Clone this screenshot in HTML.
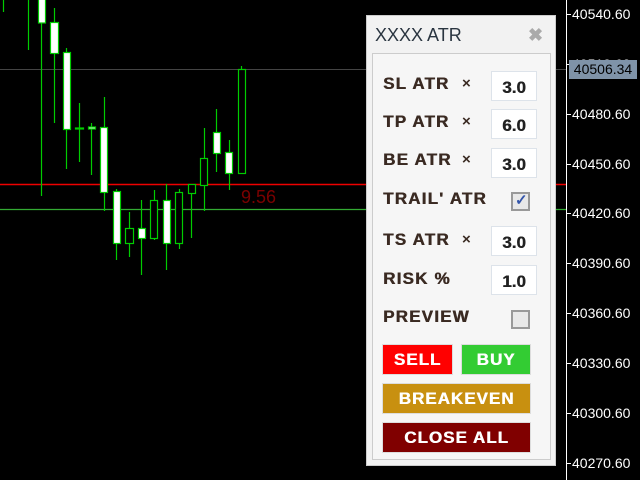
<!DOCTYPE html><html><head><style>
body{margin:0;width:640px;height:480px;background:#000;position:relative;overflow:hidden;font-family:"Liberation Sans",sans-serif}
.a{position:absolute}
.lbl{position:absolute;left:383px;font-weight:bold;font-size:17px;letter-spacing:1.2px;color:#3a2a22;text-shadow:0.5px 0 0 #3a2a22}
.x{position:absolute;left:462px;font-weight:bold;font-size:15px;color:#3a2a22}
.in{position:absolute;left:491px;width:44px;height:28px;background:#fff;border:1px solid #dde3ea;font-weight:bold;font-size:17px;color:#222;text-align:center;line-height:32px;text-shadow:0.4px 0 0 #222}
.cb{position:absolute;left:511px;width:19px;height:19px;border:2px solid #999;background:#e8e8e8;box-sizing:border-box}
.btn{position:absolute;color:#fff;font-weight:bold;font-size:17px;letter-spacing:1px;text-shadow:0.5px 0 0 #fff;text-align:center;line-height:29px;height:29px;border:1px solid #ddd}
.ax{position:absolute;left:572px;color:#fff;font-size:14px}
.tk{position:absolute;left:566px;width:5px;height:1px;background:#fff}
</style></head><body>
<svg class="a" style="left:0;top:0" width="566" height="480">
<line x1="0" y1="69.5" x2="566" y2="69.5" stroke="#444"/>
<line x1="0" y1="184.5" x2="566" y2="184.5" stroke="#e00" stroke-width="1.5"/>
<line x1="0" y1="209.5" x2="566" y2="209.5" stroke="#3a3" stroke-width="1.2"/>
<g stroke="#00cc00" stroke-width="1.2">
<line x1="3.5" y1="0" x2="3.5" y2="12"/><line x1="28.5" y1="0" x2="28.5" y2="50"/>
<line x1="41.5" y1="0" x2="41.5" y2="196"/><line x1="54.5" y1="8" x2="54.5" y2="123"/>
<line x1="66.5" y1="48" x2="66.5" y2="169"/><line x1="79.5" y1="103" x2="79.5" y2="162"/>
<line x1="91.5" y1="123" x2="91.5" y2="175"/><line x1="104.5" y1="97" x2="104.5" y2="211"/>
<line x1="116.5" y1="189" x2="116.5" y2="260"/><line x1="129.5" y1="212" x2="129.5" y2="257"/>
<line x1="141.5" y1="200" x2="141.5" y2="275"/><line x1="154.5" y1="190" x2="154.5" y2="240"/>
<line x1="166.5" y1="184" x2="166.5" y2="270"/><line x1="179.5" y1="189" x2="179.5" y2="249"/>
<line x1="191.5" y1="184" x2="191.5" y2="238"/><line x1="204.5" y1="128" x2="204.5" y2="211"/>
<line x1="216.5" y1="109" x2="216.5" y2="172"/><line x1="229.5" y1="140" x2="229.5" y2="190"/>
<line x1="241.5" y1="66" x2="241.5" y2="173"/>
</g>
<g stroke="#00cc00" stroke-width="1.2">
<rect x="38.5" y="-2" width="7" height="25" fill="#fff"/>
<rect x="50.5" y="22.5" width="8" height="31" fill="#fff"/>
<rect x="63.5" y="52.5" width="7" height="77" fill="#fff"/>
<rect x="75.5" y="128" width="8" height="1" fill="#fff"/>
<rect x="88.5" y="127" width="7" height="2" fill="#fff"/>
<rect x="100.5" y="127.5" width="7" height="65" fill="#fff"/>
<rect x="113.5" y="191.5" width="7" height="52" fill="#fff"/>
<rect x="125.5" y="228.5" width="8" height="15" fill="#000"/>
<rect x="138.5" y="228.5" width="7" height="10" fill="#fff"/>
<rect x="150.5" y="200.5" width="7" height="38" fill="#000"/>
<rect x="163.5" y="200.5" width="7" height="43" fill="#fff"/>
<rect x="175.5" y="192.5" width="7" height="51" fill="#000"/>
<rect x="188.5" y="184.5" width="7" height="9" fill="#000"/>
<rect x="200.5" y="158.5" width="7" height="27" fill="#000"/>
<rect x="213.5" y="132.5" width="7" height="21" fill="#fff"/>
<rect x="225.5" y="152.5" width="7" height="21" fill="#fff"/>
<rect x="238.5" y="69.5" width="7" height="104" fill="#000"/>
</g>
<text x="241" y="203" fill="#7a0000" font-size="18" font-family="Liberation Sans">9.56</text>
</svg>
<div class="a" style="left:566px;top:0;width:1px;height:480px;background:#fff"></div>
<div class="tk" style="top:14px"></div><div class="ax" style="top:6px">40540.60</div>
<div class="tk" style="top:64px"></div><div class="ax" style="top:56px">40510.60</div>
<div class="tk" style="top:114px"></div><div class="ax" style="top:106px">40480.60</div>
<div class="tk" style="top:164px"></div><div class="ax" style="top:156px">40450.60</div>
<div class="tk" style="top:213px"></div><div class="ax" style="top:205px">40420.60</div>
<div class="tk" style="top:263px"></div><div class="ax" style="top:255px">40390.60</div>
<div class="tk" style="top:313px"></div><div class="ax" style="top:305px">40360.60</div>
<div class="tk" style="top:363px"></div><div class="ax" style="top:355px">40330.60</div>
<div class="tk" style="top:413px"></div><div class="ax" style="top:405px">40300.60</div>
<div class="tk" style="top:463px"></div><div class="ax" style="top:455px">40270.60</div>
<div class="a" style="left:569px;top:60px;width:68px;height:19px;background:#7f93a8;color:#000;font-size:14px;line-height:19px;text-align:center">40506.34</div>
<div class="a" style="left:366px;top:15px;width:190px;height:451px;background:#f2f2f2;border:1px solid #ccc;box-sizing:border-box"></div>
<div class="a" style="left:375px;top:25px;font-size:18px;color:#2a3540">XXXX ATR</div>
<div class="a" style="left:528px;top:25px;font-size:18px;color:#aaa;font-weight:bold">✖</div>
<div class="a" style="left:372px;top:53px;width:179px;height:407px;background:#f6f6f6;border:1px solid #ccc;box-sizing:border-box"></div>
<div class="lbl" style="top:74px">SL ATR</div><div class="x" style="top:75px">×</div><div class="in" style="top:71px">3.0</div>
<div class="lbl" style="top:112px">TP ATR</div><div class="x" style="top:113px">×</div><div class="in" style="top:109px">6.0</div>
<div class="lbl" style="top:150px">BE ATR</div><div class="x" style="top:151px">×</div><div class="in" style="top:148px">3.0</div>
<div class="lbl" style="top:189px">TRAIL' ATR</div>
<div class="cb" style="top:192px"><span style="position:absolute;left:2px;top:-3px;color:#3355aa;font-size:15px;font-weight:bold">✓</span></div>
<div class="lbl" style="top:230px">TS ATR</div><div class="x" style="top:231px">×</div><div class="in" style="top:226px">3.0</div>
<div class="lbl" style="top:269px">RISK %</div><div class="in" style="top:265px">1.0</div>
<div class="lbl" style="top:307px">PREVIEW</div><div class="cb" style="top:310px"></div>
<div class="btn" style="left:382px;top:344px;width:69px;background:#ff0000">SELL</div>
<div class="btn" style="left:461px;top:344px;width:68px;background:#33cc33">BUY</div>
<div class="btn" style="left:382px;top:383px;width:147px;background:#c89010">BREAKEVEN</div>
<div class="btn" style="left:382px;top:422px;width:147px;background:#800000">CLOSE ALL</div>
</body></html>
